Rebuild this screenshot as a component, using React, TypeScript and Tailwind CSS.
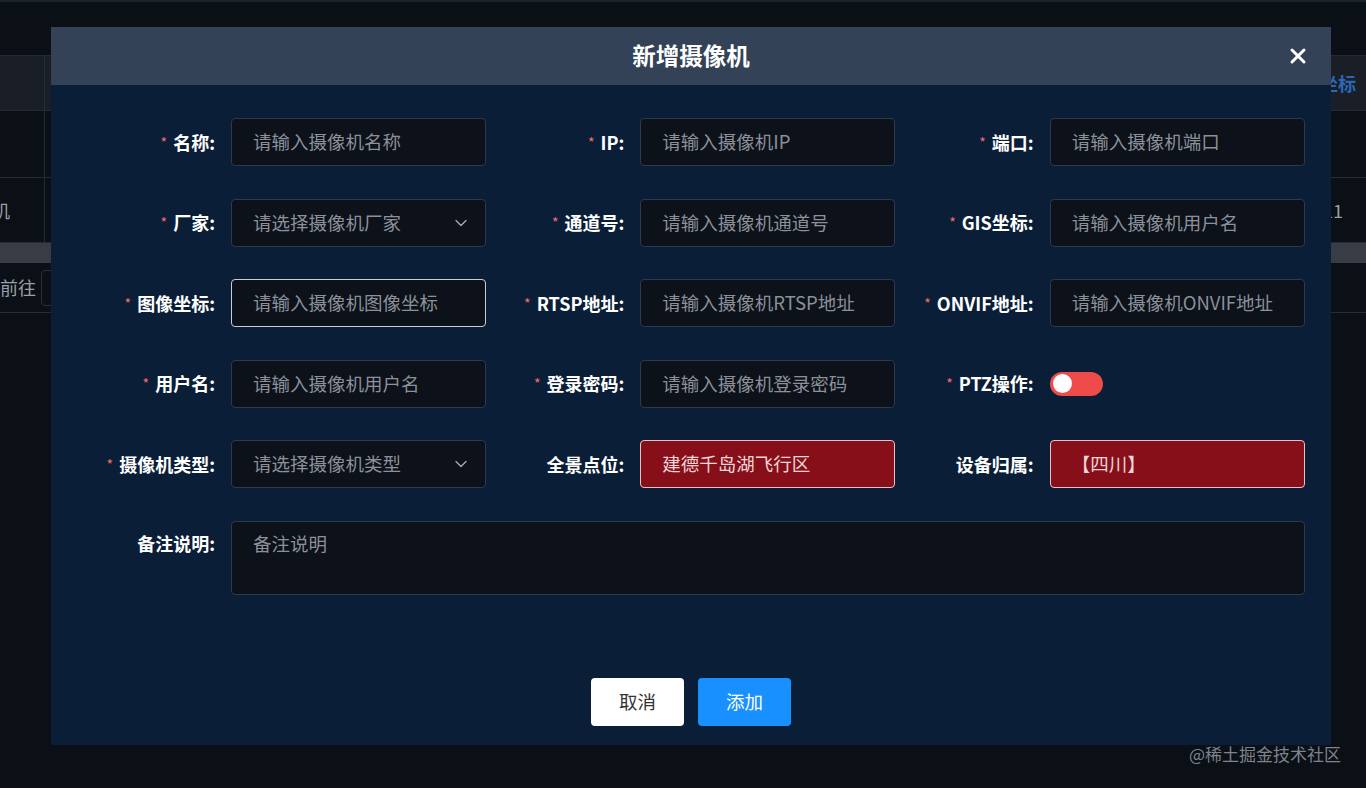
import { ChevronDown, X } from 'lucide-react'

type Field = {
  label: string
  required?: boolean
  placeholder?: string
  value?: string
  kind?: 'input' | 'select' | 'switch' | 'focused' | 'error'
}

const FIELDS: Field[] = [
  { label: '名称:', required: true, placeholder: '请输入摄像机名称' },
  { label: 'IP:', required: true, placeholder: '请输入摄像机IP' },
  { label: '端口:', required: true, placeholder: '请输入摄像机端口' },
  { label: '厂家:', required: true, placeholder: '请选择摄像机厂家', kind: 'select' },
  { label: '通道号:', required: true, placeholder: '请输入摄像机通道号' },
  { label: 'GIS坐标:', required: true, placeholder: '请输入摄像机用户名' },
  { label: '图像坐标:', required: true, placeholder: '请输入摄像机图像坐标', kind: 'focused' },
  { label: 'RTSP地址:', required: true, placeholder: '请输入摄像机RTSP地址' },
  { label: 'ONVIF地址:', required: true, placeholder: '请输入摄像机ONVIF地址' },
  { label: '用户名:', required: true, placeholder: '请输入摄像机用户名' },
  { label: '登录密码:', required: true, placeholder: '请输入摄像机登录密码' },
  { label: 'PTZ操作:', required: true, kind: 'switch' },
  { label: '摄像机类型:', required: true, placeholder: '请选择摄像机类型', kind: 'select' },
  { label: '全景点位:', value: '建德千岛湖飞行区', kind: 'error' },
  { label: '设备归属:', value: '【四川】', kind: 'error' },
]

const FONT = { fontFamily: '"Noto Sans CJK SC", "Noto Sans", sans-serif' }

function Label({ text, required }: { text: string; required?: boolean }) {
  return (
    <div className="flex w-[154px] shrink-0 items-center justify-end pr-[16px] text-[18px] font-bold text-white">
      {required && <span className="mr-[6px] text-[14px] font-normal text-[#f56c6c]">*</span>}
      <span>{text}</span>
    </div>
  )
}

function Control({ field }: { field: Field }) {
  if (field.kind === 'switch') {
    return (
      <div className="flex h-[48px] w-[255px] items-center">
        <div className="flex h-[24px] w-[53px] items-center rounded-full bg-[#f04b4b] px-[3px]">
          <div className="h-[19px] w-[19px] rounded-full bg-white" />
        </div>
      </div>
    )
  }
  if (field.kind === 'error') {
    return (
      <div className="flex h-[48px] w-[255px] items-center rounded-[4px] border border-[#e3c3c6] bg-[#860f1a] pl-[21px] text-[18.5px] text-[#f0d6d8]">
        {field.value}
      </div>
    )
  }
  const border = field.kind === 'focused' ? 'border-[#c7ced6]' : 'border-[#2b3a4f]'
  return (
    <div
      className={`flex h-[48px] w-[255px] items-center justify-between rounded-[4px] border ${border} bg-[#0c111a] pl-[21px] pr-[14px] text-[18.5px] text-[#8b9099]`}
    >
      <span className="whitespace-nowrap">{field.placeholder}</span>
      {field.kind === 'select' && <ChevronDown size={20} strokeWidth={1.5} className="text-[#a7adb5]" />}
    </div>
  )
}

function Background() {
  return (
    <div className="flex h-full flex-col pt-[53px]">
      <div className="flex h-[56px] items-center justify-end border-y border-[#242a33] bg-[#1a1f27] pr-[10px]">
        <div className="h-full w-[45px] border-r border-[#262c35]" />
        <div className="flex-1" />
        <span className="text-[18px] font-bold text-[#2a67b8]">坐标</span>
      </div>
      <div className="flex h-[67px] border-b border-[#262c35]">
        <div className="w-[45px] border-r border-[#262c35]" />
      </div>
      <div className="flex h-[65px] items-center border-b border-[#262c35] text-[18px] text-[#9aa0a8]">
        <div className="flex h-full w-[45px] items-center border-r border-[#262c35]">
          <span className="-ml-[8px]">机</span>
        </div>
        <div className="flex-1" />
        <span className="pr-[23px]">11</span>
      </div>
      <div className="h-[20px] bg-[#383d45]" />
      <div className="flex h-[50px] items-center border-b border-[#262c35] text-[18px] text-[#9aa0a8]">
        <span>前往</span>
        <div className="ml-[5px] h-[36px] w-[40px] rounded-[4px] border border-[#2b313a]" />
      </div>
    </div>
  )
}

export default function App() {
  return (
    <div className="relative h-[788px] w-[1366px] overflow-hidden bg-[#0b0f16]" style={FONT}>
      <div className="h-[2px] bg-[#1c222b]" />
      <div className="absolute inset-0 top-[2px]">
        <Background />
      </div>

      <div className="absolute left-[51px] top-[27px] flex h-[718px] w-[1280px] flex-col bg-[#0a1e37]">
        <div className="relative flex h-[58px] shrink-0 items-center justify-center bg-[#334256]">
          <h2 className="text-[23.5px] font-semibold text-white">新增摄像机</h2>
          <X size={24} strokeWidth={3} className="absolute right-[21px] top-[17px] text-white" />
        </div>

        <div className="grid grid-cols-3 gap-y-[32.5px] px-[26px] pt-[33px]">
          {FIELDS.map((f) => (
            <div key={f.label} className="flex items-center">
              <Label text={f.label} required={f.required} />
              <Control field={f} />
            </div>
          ))}
          <div className="col-span-3 flex">
            <div className="flex w-[154px] shrink-0 justify-end pr-[16px] pt-[9px] text-[18px] font-bold text-white">
              备注说明:
            </div>
            <div className="h-[74px] flex-1 rounded-[4px] border border-[#2b3a4f] bg-[#0c111a] pl-[21px] pt-[8px] text-[18.5px] text-[#8b9099]">
              备注说明
            </div>
          </div>
        </div>

        <div className="mt-[83px] flex justify-center gap-[14px]">
          <button
            type="button"
            className="h-[48px] w-[93px] rounded-[4px] bg-white text-[18.5px] text-[#333]"
          >
            取消
          </button>
          <button
            type="button"
            className="h-[48px] w-[93px] rounded-[4px] bg-[#1890ff] text-[18.5px] text-white"
          >
            添加
          </button>
        </div>
      </div>

      <div className="absolute bottom-[22px] right-[25px] text-[17px] text-[#7d838c]">@稀土掘金技术社区</div>
    </div>
  )
}
